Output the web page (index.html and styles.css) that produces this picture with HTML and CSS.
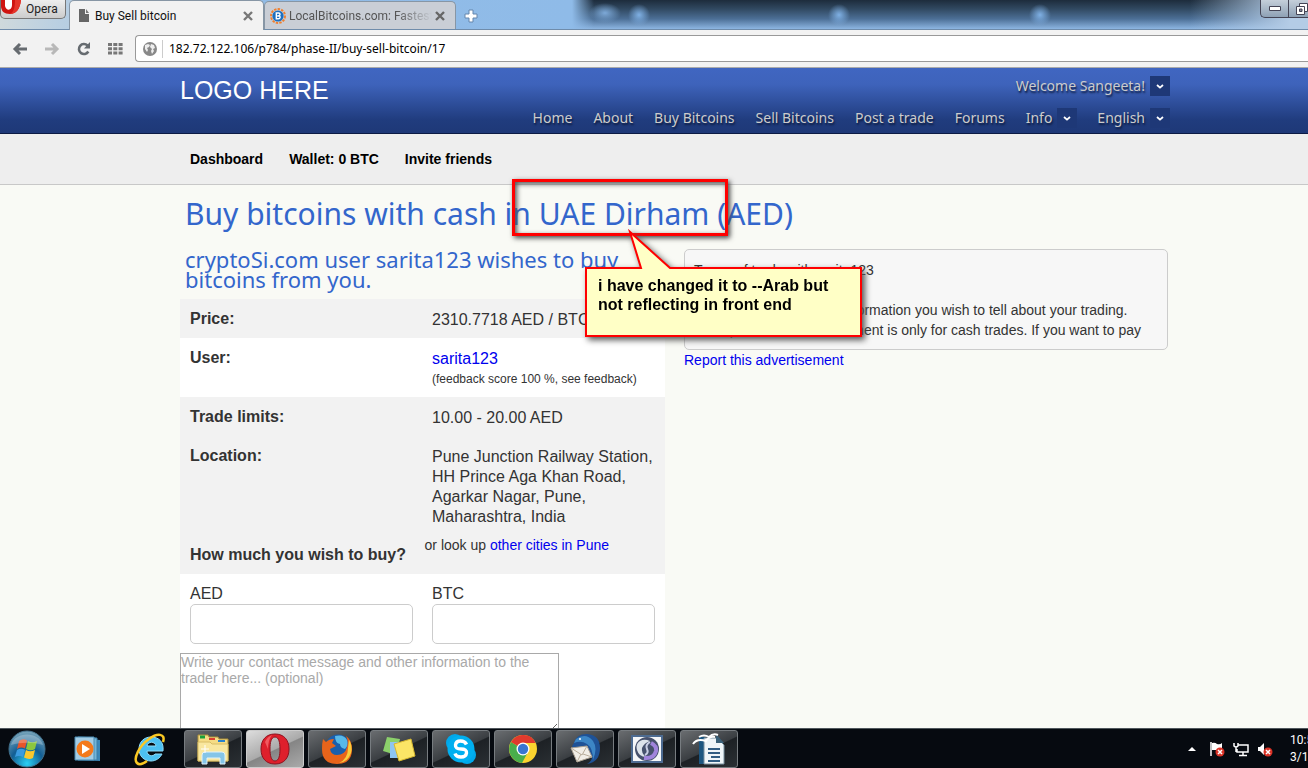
FILE: index.html
```html
<!DOCTYPE html>
<html lang="en">
<head>
<meta charset="utf-8">
<title>Buy Sell bitcoin</title>
<link rel="stylesheet" href="styles.css">
</head>
<body>
<div class="desktop">
  <div class="tabstrip">
    <button class="opera-menu"><svg width="22" height="16" viewBox="0 0 22 16"><path d="M0 0h20c-1 9-5 14-11 14C3 14 0 11 0 6z" fill="#cf1410"/><path d="M4 0h7v5c0 6-6 6-7 1z" fill="#fff"/><path d="M14 0h6c-1 9-5 14-11 14 4-2 5-7 5-14z" fill="#e5352a"/></svg>Opera</button>
    <div class="tab tab-active">
      <svg width="12" height="13" viewBox="0 0 12 13"><path d="M1 0h6v5h4v8H1z" fill="#666"/><path d="M8 0l3 4H8z" fill="#777"/></svg>
      <span class="tab-title">Buy Sell bitcoin</span>
      <button class="tab-close" aria-label="Close tab"><svg width="10" height="10" viewBox="0 0 10 10"><path d="M1 1l8 8M9 1L1 9" stroke="#777" stroke-width="2.4"/></svg></button>
    </div>
    <div class="tab tab-back">
      <svg width="16" height="16" viewBox="0 0 16 16"><circle cx="8" cy="8" r="7" fill="none" stroke="#f08030" stroke-width="2" stroke-dasharray="2.4 1.2"/><circle cx="8" cy="8" r="5.6" fill="#1c6fc0"/><path d="M6.3 5h2.400q1.400.1 1.300 1.400-.1.9-1 1.300 1.200.3 1.100 1.600-.2 1.500-1.800 1.500H6.300z" fill="none" stroke="#fff" stroke-width="1.400"/><path d="M6.500 8h2.500" stroke="#fff"/></svg>
      <span class="tab-title tab-fade">LocalBitcoins.com: Fastest</span>
      <button class="tab-close" aria-label="Close tab"><svg width="10" height="10" viewBox="0 0 10 10"><path d="M1 1l8 8M9 1L1 9" stroke="#666" stroke-width="2.4"/></svg></button>
    </div>
    <button class="new-tab" aria-label="New tab"><svg width="14" height="14" viewBox="0 0 14 14"><path d="M5 1h4v4h4v4H9v4H5V9H1V5h4z" fill="#fff" stroke="#6486ad"/></svg></button>
    <div class="window-buttons">
      <button class="win-btn" aria-label="Minimize"><svg width="12" height="5" viewBox="0 0 12 5"><path d="M.5.5h11v4H.5z" fill="#fff" stroke="#445"/></svg></button>
      <button class="win-btn" aria-label="Restore"><svg width="12" height="12" viewBox="0 0 12 12"><path d="M3.500 .5h8v8h-8z" fill="#fff" stroke="#445"/><path d="M.5 3.500h8v8h-8z" fill="#fff" stroke="#445"/><path d="M3.500 6h2.500v2.500H3.500z" fill="#889" stroke="#445"/></svg></button>
    </div>
  </div>

  <div class="toolbar">
    <button class="tool" aria-label="Back"><svg width="16" height="14" viewBox="0 0 16 14"><path d="M15 7H3M8 2L3 7l5 5" fill="none" stroke="#666b70" stroke-width="3"/></svg></button>
    <button class="tool" aria-label="Forward"><svg width="16" height="14" viewBox="0 0 16 14"><path d="M1 7h12M8 2l5 5-5 5" fill="none" stroke="#b8b8b8" stroke-width="3"/></svg></button>
    <button class="tool" aria-label="Reload"><svg width="14" height="14" viewBox="0 0 14 14"><path d="M11.300 9.500A5 5 0 1 1 10.500 3.500" fill="none" stroke="#666b70" stroke-width="2.600"/><path d="M13 0v6.500H7z" fill="#666b70"/></svg></button>
    <button class="tool tool-last" aria-label="Speed Dial"><svg width="15" height="12" viewBox="0 0 15 12"><path d="M0 1.500h15M0 5.700h15M0 9.900h15" stroke="#777" stroke-width="3" stroke-dasharray="4 1.300"/></svg></button>
    <label class="address">
      <svg width="16" height="16" viewBox="0 0 16 16"><circle cx="8" cy="8" r="7" fill="#888"/><path d="M3 4l3-1 2 1-1 2-2 1 1 2-1 2-2-3zM9 3l3 1 1 3-2 1 1 2-2 3-1-3 1-2-2-2z" fill="#eee"/></svg>
      <input class="url" type="text" aria-label="Address" value="182.72.122.106/p784/phase-II/buy-sell-bitcoin/17">
    </label>
  </div>

  <div class="page">
    <header class="site-header">
      <div class="wrap header-grid">
        <div class="logo">LOGO HERE</div>
        <div class="header-menus">
          <div class="menu-row"><a class="drop" href="#">Welcome Sangeeta!<span class="arrow"><svg width="8" height="5" viewBox="0 0 8 5"><path d="M1 1l3 2.600L7 1" fill="none" stroke="#fff" stroke-width="1.800"/></svg></span></a></div>
          <nav class="menu-row">
            <a class="plain" href="#">Home</a><a class="plain" href="#">About</a><a class="plain" href="#">Buy Bitcoins</a><a class="plain" href="#">Sell Bitcoins</a><a class="plain" href="#">Post a trade</a><a class="plain" href="#">Forums</a>
            <a class="drop" href="#">Info<span class="arrow"><svg width="8" height="5" viewBox="0 0 8 5"><path d="M1 1l3 2.600L7 1" fill="none" stroke="#fff" stroke-width="1.800"/></svg></span></a>
            <a class="drop" href="#">English<span class="arrow"><svg width="8" height="5" viewBox="0 0 8 5"><path d="M1 1l3 2.600L7 1" fill="none" stroke="#fff" stroke-width="1.800"/></svg></span></a>
          </nav>
        </div>
      </div>
    </header>
    <nav class="subnav"><div class="wrap subnav-links"><a href="#">Dashboard</a><a href="#">Wallet: 0 BTC</a><a href="#">Invite friends</a></div></nav>

    <main class="wrap content">
      <h1>Buy bitcoins with cash in UAE Dirham (AED)</h1>
      <div class="columns">
        <section class="trade">
          <h2>cryptoSi.com user sarita123 wishes to buy bitcoins from you.</h2>
          <table class="details">
            <tr><th>Price:</th><td>2310.7718 AED / BTC</td></tr>
            <tr class="light"><th>User:</th><td><a href="#">sarita123</a><small>(feedback score 100 %, see feedback)</small></td></tr>
            <tr><th>Trade limits:</th><td>10.00 - 20.00 AED</td></tr>
            <tr><th>Location:</th><td>Pune Junction Railway Station, HH Prince Aga Khan Road, Agarkar Nagar, Pune, Maharashtra, India</td></tr>
          </table>
          <div class="ask"><h3>How much you wish to buy?</h3><p>or look up <a href="#">other cities in Pune</a></p></div>
          <form class="order">
            <div class="amounts">
              <label>AED<input type="text"></label>
              <label>BTC<input type="text"></label>
            </div>
            <textarea aria-label="Contact message" placeholder="Write your contact message and other information to the trader here... (optional)"></textarea>
          </form>
        </section>
        <aside class="side">
          <div class="terms"><p>Terms of trade with sarita123</p><p>Please share any other information you wish to tell about your trading. Example:&nbsp; "This advertisement is only for cash trades. If you want to pay</p></div>
          <a href="#">Report this advertisement</a>
        </aside>
      </div>
    </main>
  </div>

  <footer class="taskbar">
    <button class="launch launch-start" aria-label="Start"><svg width="40" height="38" viewBox="0 0 40 38"><defs><radialGradient id="orb" cx=".5" cy=".9" r=".9"><stop offset="0" stop-color="#2cd0f4"/><stop offset=".5" stop-color="#125e94"/><stop offset="1" stop-color="#7aa6bb"/></radialGradient></defs><circle cx="20" cy="19" r="18" fill="url(#orb)" stroke="#41708b"/><path d="M12 11q4-3 8-.5l-2 8q-4-2-8 .5z" fill="#e8542a"/><path d="M21 11q4 2.500 9 0l-2 8q-4 2.500-9 0z" fill="#8cc63e"/><path d="M10 20q4-2.500 8 0l-2 7q-4-2-8 0z" fill="#3b9be0"/><path d="M19 20q4 2.500 9 0l-2 8q-4 2-9-.5z" fill="#fbc82e"/><path d="M4 15C8 1 32 1 36 15c-10-3-22-3-32 0z" fill="#fff" opacity=".25"/></svg></button>
    <button class="launch" aria-label="Media Player"><svg width="28" height="26" viewBox="0 0 28 26"><path d="M7 2l19 2v21l-19-1z" fill="#3b87b8"/><path d="M4 1l19 1v22H4z" fill="#74b5d8" stroke="#3d7ea8"/><path d="M1 1h19v23H1z" fill="#a4cde5" stroke="#4b8db5"/><circle cx="11" cy="13" r="8.500" fill="#f47a1c"/><path d="M8 8l8 5-8 5z" fill="#fff"/></svg></button>
    <button class="launch launch-ie" aria-label="Internet Explorer"><svg width="34" height="34" viewBox="0 0 34 34"><path d="M17 5c-7 0-12 5-12 12s5 12 12 12c5 0 9-3 11-7h-7c-2 3-8 2-8-3h16C30 10 25 5 17 5zm-4 9c1-5 8-5 9 0z" fill="#4cc0f2" stroke="#8edcfb"/><path d="M29 10c3-9-6-9-14-3C5 14-1 27 3 31c2 2 6 1 10-2" fill="none" stroke="#fac823" stroke-width="2.500"/></svg></button>
    <div class="tasks">
      <button class="task" aria-label="Explorer"><svg width="34" height="32" viewBox="0 0 34 32"><path d="M2 2h10l1 2h9l1 2h9v22H2z" fill="#f5dc84" stroke="#ad913a"/><path d="M2 9h12l2 2h16v17H2z" fill="#f9e79f" stroke="#d8bd66"/><path d="M4 4h5" stroke="#18a03a" stroke-width="3"/><path d="M13 6h6" stroke="#d94030" stroke-width="2"/><path d="M22 8h7" stroke="#2982cd" stroke-width="2"/><path d="M6 31v-9q0-3 3-3h17q3 0 3 3v9h-5v-6H11v6z" fill="#85c5e8" stroke="#dff2fa"/><path d="M9 12v8M5 16h8" stroke="#fff" stroke-width="1"/></svg></button>
      <button class="task task-active" aria-label="Opera"><svg width="30" height="32" viewBox="0 0 30 32"><path fill-rule="evenodd" d="M15 1C6 1 1 7 1 16s5 15 14 15 14-6 14-15S24 1 15 1zm0 3c4 0 5 6 5 12s-1 12-5 12-5-6-5-12 1-12 5-12z" fill="#de202c" stroke="#8e1420"/><path d="M5 9q2-5 7-7-4 5-4 14" fill="#f25a60"/></svg></button>
      <button class="task" aria-label="Firefox"><svg width="32" height="32" viewBox="0 0 32 32"><circle cx="17" cy="14" r="12.500" fill="#1b5fad"/><path d="M14 3q9-2 12 4 2 5-2 9-5-1-5-5-5-1-5-8z" fill="#58b9e8"/><path d="M2 6l3 3q3-3 8-3l-2 4 4 3-6 3q1 6 7 6 8 0 10-8 2-5-1-11 6 4 6 13 0 15-15 15Q1 31 1 16 1 10 2 6z" fill="#e8641b"/><path d="M28 7q4 6 2 13-3 9-12 10 9-4 9-15z" fill="#f9cd3b"/></svg></button>
      <button class="task" aria-label="Sticky Notes"><svg width="34" height="28" viewBox="0 0 34 28"><path d="M5 2l13 2-4 16L1 16z" fill="#8bd06b"/><path d="M8 7h15v16H8z" fill="#8dc5f2"/><path d="M12 9l17-5 4 17-16 5z" fill="#fbe566" stroke="#d7b82e"/></svg></button>
      <button class="task" aria-label="Skype"><svg width="32" height="32" viewBox="0 0 32 32"><circle cx="10" cy="10" r="9" fill="#00a8eb"/><circle cx="22" cy="22" r="9" fill="#00a8eb"/><circle cx="16" cy="16" r="13.500" fill="#00aff0"/><path d="M21.500 11.500Q20 8 15.500 8T10.500 12t5.500 4 5.500 4-5.500 4-6-3.500" fill="none" stroke="#fff" stroke-width="3.400"/></svg></button>
      <button class="task" aria-label="Chrome"><svg width="30" height="30" viewBox="0 0 30 30"><circle cx="15" cy="15" r="14" fill="#fbd32f"/><path d="M15 15L3 8a14 14 0 0 0 11 21l6-11z" fill="#49ae4b"/><path d="M15 15L3 8Q8 0 16 1q8 0 11.500 8H16z" fill="#e03a2d"/><circle cx="15" cy="15" r="6.500" fill="#fff"/><circle cx="15" cy="15" r="5.200" fill="#3976d1"/></svg></button>
      <button class="task" aria-label="Thunderbird"><svg width="34" height="32" viewBox="0 0 34 32"><path d="M6 10Q8 1 19 1q13 1 13 14 0 14-13 16 5-3 5-7L7 18Q2 14 6 10z" fill="#1f5296"/><path d="M8 6Q18-1 25 8q5 7 0 19 0-12-6-16-6-4-13-1z" fill="#3c86c6"/><path d="M3 15l16-2 5 11-15 5z" fill="#f1eee7" stroke="#aaa091"/><path d="M3 15l11 7 5-9M9 29l4-8M24 24l-9-3" fill="none" stroke="#b8ad9b"/><circle cx="12" cy="6" r="1" fill="#fff"/></svg></button>
      <button class="task" aria-label="Converter"><svg width="32" height="28" viewBox="0 0 32 28"><path d="M1 1h30v26H1z" fill="#f4f6f8" stroke="#4d6b91" stroke-width="2"/><circle cx="16" cy="14" r="12" fill="#46516c"/><path d="M19 6C9 2 4 9 6 15q2 7 9 7-5-4-4-9 2-5 8-7z" fill="#dce3ea"/><path d="M20 8q6 3 5 8-2 8-12 7" fill="none" stroke="#a084dc" stroke-width="4"/><path d="M19 7q-5 3-3 7t-2 6" fill="none" stroke="#c9cfe4" stroke-width="2"/></svg></button>
      <button class="task" aria-label="Writer"><svg width="34" height="32" viewBox="0 0 34 32"><path d="M7 4h6v27H7z" fill="#1d5680"/><path d="M12 5h13l7 7v19H12z" fill="#eff5f8" stroke="#78909f"/><path d="M24 1l8 9h-8z" fill="#3a6078"/><path d="M16 16h12M16 20h12M19 24h9M16 28h12" stroke="#315c82" stroke-width="2"/><path d="M1 11q4-6 13-3 3-5 9-4M7 4q5-3 10 0 4-4 9-2" fill="none" stroke="#fff" stroke-width="2"/></svg></button>
    </div>
    <div class="tray">
      <svg class="tray-more" width="8" height="5" viewBox="0 0 8 5"><path d="M4 0l4 4H0z" fill="#fff"/></svg>
      <svg width="16" height="16" viewBox="0 0 16 16"><path d="M2 1v14" stroke="#fff" stroke-width="1.500"/><path d="M3 2q3-1 5 1 3 1 5-1v7H3z" fill="#fff"/><circle cx="11" cy="11" r="4.500" fill="#db3327"/><path d="M9 9l4 4M13 9l-4 4" stroke="#fff" stroke-width="1.500"/></svg>
      <svg width="16" height="16" viewBox="0 0 16 16"><path d="M5 4h10v7H4V8M10 11v3M6 14.500h8M1 2v3q2 2 4 0V2M3 6v5" fill="none" stroke="#fff" stroke-width="1.500"/></svg>
      <svg width="16" height="16" viewBox="0 0 16 16"><path d="M1 6h2l4-4v12l-4-4H1z" fill="#fff"/><circle cx="11" cy="11" r="4.500" fill="#db3327"/><path d="M9 9l4 4M13 9l-4 4" stroke="#fff" stroke-width="1.500"/></svg>
      <div class="clock"><span>10:5</span><span>3/15</span></div>
    </div>
  </footer>

  <div class="mark"></div>
  <div class="callout">
    <svg width="290" height="120" viewBox="0 0 290 120"><path d="M47 4L58 40H3v68h275V40H87z" fill="#ffffc6" stroke="#f00" stroke-width="2"/></svg>
    <p>i have changed it to --Arab but not reflecting in front end</p>
  </div>
</div>
</body>
</html>
```
FILE: styles.css
```css
* { box-sizing: border-box; }
body { margin: 0; font-family: "Liberation Sans", Arial, sans-serif; font-size: 14px; color: #333; }
button { margin: 0; padding: 0; border: 0; background: none; font: inherit; color: inherit; }
a { color: #00e; text-decoration: none; }
h1, h2, h3, p { margin: 0; font-weight: normal; }
svg { display: block; flex: none; }

.desktop { position: relative; display: flex; flex-direction: column; height: 100vh; overflow: hidden; }

/* browser frame */
.tabstrip {
  flex: none; display: flex; height: 30px; border-bottom: 1px solid #6f8cab;
  font-family: Roboto, sans-serif; font-size: 12px; color: #222;
  background:
    radial-gradient(ellipse 16px 10px at 605px 13px, #7da9d8, transparent),
    radial-gradient(circle 11px at 639px 15px, #7fb0e4, transparent),
    radial-gradient(circle 11px at 839px 15px, #7fb0e4, transparent),
    radial-gradient(circle 11px at 1040px 15px, #7fb0e4, transparent),
    linear-gradient(90deg, #cfd9dc 0, #b9cfe2 60px, #92bce6 200px, #8fbbe8 572px, transparent 594px, transparent 1190px, #b4cce6 1290px),
    linear-gradient(#1d2c3c 0, #304860 30%, #4c6f96 65%, #8db6e2 100%);
}
.opera-menu {
  display: flex; align-items: flex-start; gap: 3px; width: 66px; height: 19px;
  line-height: 18px; border: 1px solid #777; border-top: 0; border-radius: 0 0 5px 5px;
  background: linear-gradient(#eee, #ccc);
}
.tab { display: flex; align-items: center; gap: 5px; padding: 0 10px 0 8px; border: 1px solid #8796a5; border-bottom: 0; border-radius: 5px 5px 0 0; }
.tab-active { width: 195px; height: 30px; margin-left: 3px; background: #f2f2f2; color: #111; }
.tab-back { width: 192px; height: 28px; margin-top: 1px; gap: 3px; padding-left: 5px; background: #c9ced6; color: #555; }
.tab-title { flex: 1; overflow: hidden; white-space: nowrap; }
.tab-fade { mask-image: linear-gradient(90deg, #000 75%, transparent); }
.new-tab { padding: 2px 8px 0; }
.window-buttons { display: flex; width: 48px; height: 18px; margin-left: auto; border: 1px solid #445; border-top: 0; border-right: 0; border-radius: 0 0 0 5px; background: linear-gradient(#c5cfda, #8ea1b5); }
.win-btn { display: flex; align-items: center; justify-content: center; width: 28px; border-right: 1px solid #445; }
.win-btn + .win-btn { width: 19px; padding-left: 6px; border-right: 0; }

.toolbar { flex: none; display: flex; align-items: center; height: 38px; padding-left: 12px; background: #f2f2f2; border-bottom: 1px solid #aaa; }
.tool { display: flex; align-items: center; justify-content: center; width: 32px; padding-right: 16px; }
.tool-last { width: 27px; padding-right: 12px; }
.address { flex: 1; display: flex; align-items: center; gap: 4px; height: 27px; padding-left: 6px; border: 1px solid #999; border-right: 0; border-radius: 4px 0 0 4px; background: #fff; }
.url { flex: 1; height: 18px; padding: 0 0 0 6px; border: 0; border-left: 1px solid #ccc; outline: 0; font: 12px "Noto Sans", sans-serif; color: #000; }

/* site */
.page { flex: 1; min-height: 0; overflow: hidden; background: #f9faf5; }
.wrap { max-width: 1170px; padding-left: 180px; }
.site-header { border-bottom: 1px solid #0c1a44; background: linear-gradient(#4066c1 0, #3e63bb 25%, #203c7e 80%, #1e3877 100%); }
.header-grid { display: flex; justify-content: space-between; }
.logo { padding-top: 7px; font-size: 25px; line-height: 30px; color: #fff; }
.header-menus { display: flex; flex-direction: column; gap: 12px; padding: 8px 0 5px; font-family: "Noto Sans", sans-serif; font-size: 14px; line-height: 20px; }
.menu-row { display: flex; justify-content: flex-end; gap: 20px; }
.menu-row a { color: #ccc; text-shadow: 1px 2px 2px #0c1a3c; }
.plain { padding-right: 1px; }
.drop { display: flex; gap: 5px; }
.arrow { display: flex; align-items: center; justify-content: center; width: 20px; height: 20px; background: #1e3877; }
.subnav { background: #eee; border-bottom: 1px solid #c8c8c8; }
.subnav-links { display: flex; gap: 26px; padding-left: 190px; line-height: 50px; font-weight: bold; }
.subnav-links a { color: #000; }

.content { padding-top: 11px; }
h1, h2 { font-family: "Noto Sans", sans-serif; color: #36c; padding-left: 5px; }
h1 { font-size: 30px; line-height: 36px; }
.columns { display: flex; gap: 19px; padding: 17px 2px 0 0; }
.trade { width: 485px; }
h2 { padding-bottom: 10px; font-size: 22px; line-height: 20px; }
.details { width: 100%; border-collapse: collapse; font-size: 16px; line-height: 20px; background: #f2f2f2; }
.details th, .details td { padding: 11px 10px 8px; text-align: left; vertical-align: top; }
.details th { width: 242px; padding-top: 10px; }
.details small { display: block; font-size: 12px; line-height: 20px; }
.light { background: #fff; }
.ask { display: flex; justify-content: space-between; padding: 0 56px 9px 10px; line-height: 20px; background: #f2f2f2; }
.ask h3 { padding-top: 10px; font-size: 16px; font-weight: bold; }
.order { background: #fff; padding-top: 10px; font-size: 16px; line-height: 20px; }
.amounts { display: flex; gap: 19px; padding: 0 10px 9px; }
.amounts label { flex: 1; }
.amounts input { display: block; width: 100%; height: 40px; border: 1px solid #ccc; border-radius: 5px; background: #fff; }
textarea { display: block; width: 379px; height: 80px; padding: 0; border: 1px solid #a9a9a9; font: 14px/16px "Liberation Sans", Arial, sans-serif; }
textarea::placeholder { color: #a9a9a9; }
.side { flex: 1; line-height: 20px; }
.terms { padding: 10px 9px 9px; border: 1px solid #ccc; border-radius: 5px; background: #f7f7f7; }
.terms p + p { padding-top: 20px; }

/* taskbar */
.taskbar { flex: none; display: flex; align-items: center; height: 40px; padding: 1px 0 0; border-top: 1px solid #4f565c; background: #060a10; }
.launch { display: flex; justify-content: center; width: 61px; }
.launch-start { width: 54px; margin-right: 3px; }
.launch-ie { width: 66px; }
.tasks { display: flex; gap: 4px; }
.task { display: flex; align-items: center; justify-content: center; width: 58px; height: 38px; border: 1px solid #777c80; border-radius: 3px; background: linear-gradient(155deg, #6a6d70 0, #3a3e42 50%, #1d2125 52%, #2b3034 100%); }
.task-active { border-color: #ccc; background: linear-gradient(155deg, #ddd 0, #aaa 50%, #858585 52%, #aaa 100%); }
.tray { display: flex; align-items: center; gap: 8px; width: 120px; margin-left: auto; overflow: hidden; }
.tray-more { margin-right: 5px; }
.clock { display: flex; flex-direction: column; padding-left: 9px; font: 12px/17px Roboto, sans-serif; color: #fff; white-space: nowrap; }

/* annotation laid over the desktop */
.mark { position: absolute; left: 512px; top: 179px; width: 216px; height: 57px; border: 3px solid #f00; box-shadow: 2px 2px 5px #444, inset 2px 2px 5px #555; }
.callout { position: absolute; left: 583px; top: 228px; width: 290px; filter: drop-shadow(3px 3px 3px #555); }
.callout p { position: absolute; left: 15px; top: 48px; width: 240px; font-size: 16px; line-height: 19px; font-weight: bold; color: #000; }
```
